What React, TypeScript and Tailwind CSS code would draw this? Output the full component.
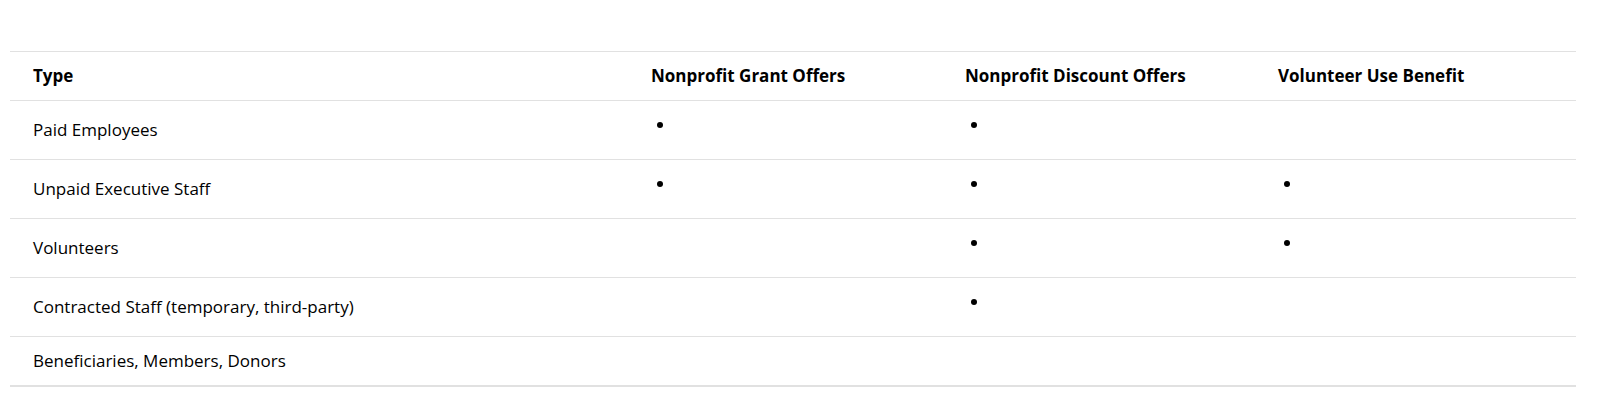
import React from "react";

const columns = ["Type", "Nonprofit Grant Offers", "Nonprofit Discount Offers", "Volunteer Use Benefit"];

// true = offer applies to that type
const rows: { type: string; marks: boolean[] }[] = [
    {type: "Paid Employees", marks: [true, true, false]},
    {type: "Unpaid Executive Staff", marks: [true, true, true]},
    {type: "Volunteers", marks: [false, true, true]},
    {type: "Contracted Staff (temporary, third-party)", marks: [false, true, false]},
    {type: "Beneficiaries, Members, Donors", marks: [false, false, false]},
];

const widths = ["w-[618px]", "w-[314px]", "w-[313px]", "w-[321px]"];

const Bullet = () => (
    <div className="h-[22px] mb-[10px] flex items-center">
        <span className="ml-[6px] block w-[6px] h-[6px] rounded-full bg-black"/>
    </div>
);

export default function App() {
    return (
        <div className="bg-white min-h-[409px] pt-[51px] pl-[10px] font-['Open_Sans',sans-serif] text-[17px] leading-[22px] text-black">
            <table className="w-[1566px] table-fixed border-collapse border-t border-[#e1e1e1]">
                <thead>
                <tr className="border-b border-[#e1e1e1]">
                    {columns.map((col, i) => (
                        <th key={i} className={`${widths[i]} text-left font-bold pl-[23px] py-[13px] align-middle`}>
                            {col}
                        </th>
                    ))}
                </tr>
                </thead>
                <tbody>
                {rows.map((row, r) => (
                    <tr key={r} className={r === rows.length - 1 ? "border-b-2 border-[#e1e1e1]" : "border-b border-[#e1e1e1]"}>
                        <td className="pl-[23px] py-[13px] align-middle">{row.type}</td>
                        {row.marks.map((m, i) => (
                            <td key={i} className="pl-[23px] py-[13px] align-middle">
                                {m ? <Bullet/> : null}
                            </td>
                        ))}
                    </tr>
                ))}
                </tbody>
            </table>
        </div>
    );
}
